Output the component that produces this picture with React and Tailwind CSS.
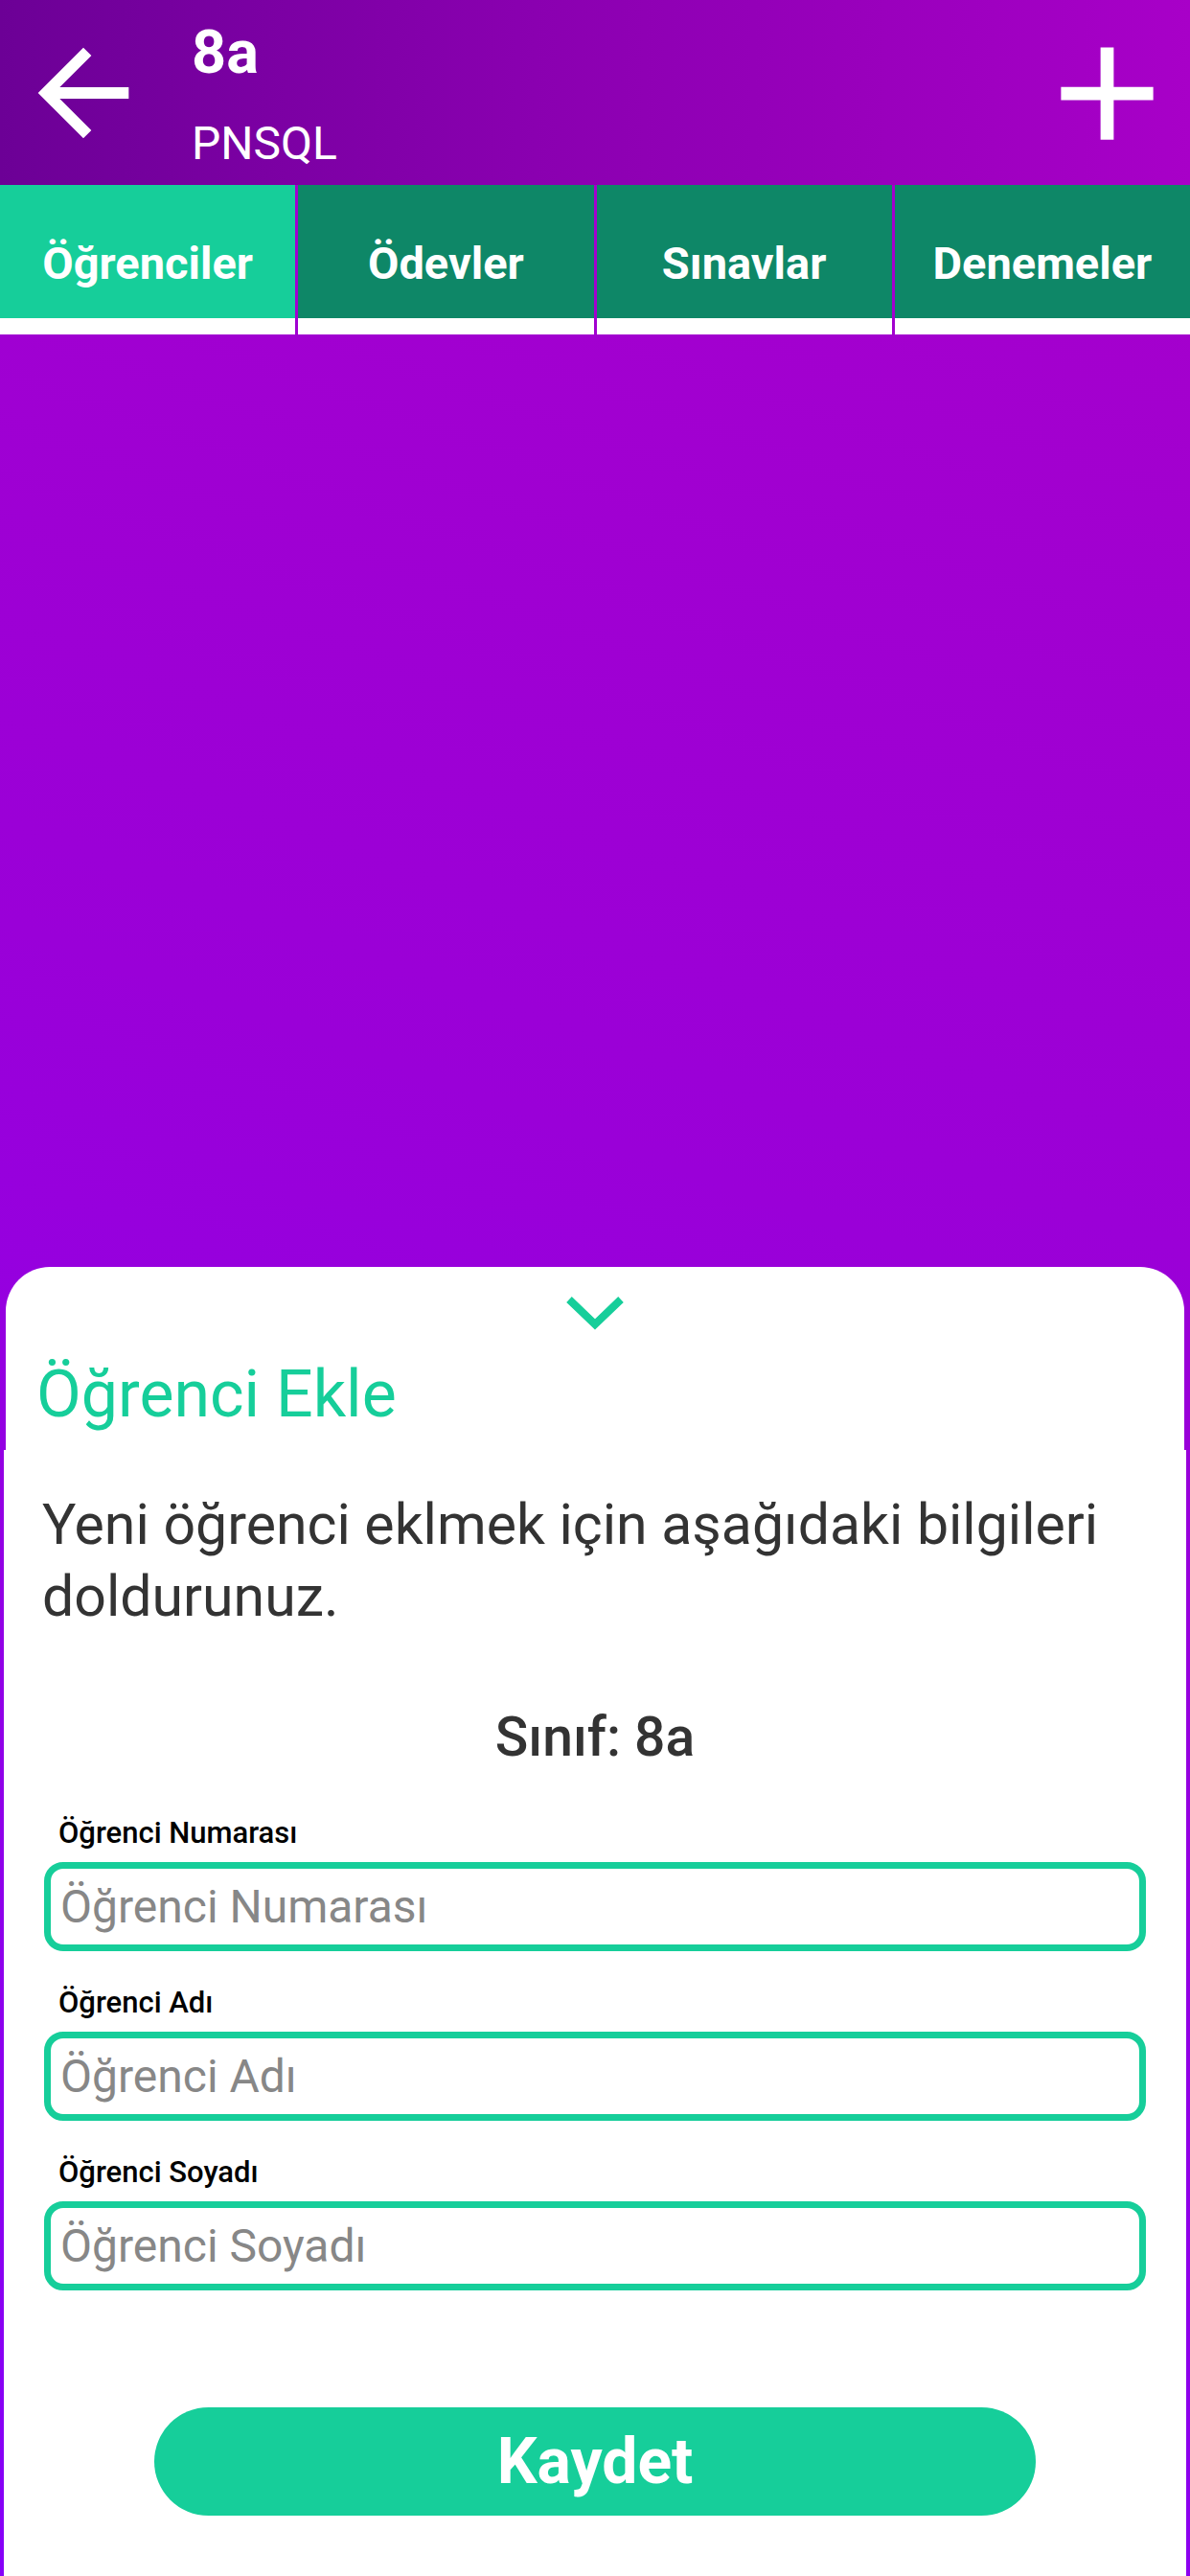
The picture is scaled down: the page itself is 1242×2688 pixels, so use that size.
import React from "react";

const font = { fontFamily: "Roboto, 'Noto Sans', sans-serif" };

function ArrowBack() {
  return (
    <svg viewBox="0 0 24 24" className="w-[142px] h-[142px]" fill="white">
      <path d="M20 11H7.83l5.59-5.59L12 4l-8 8 8 8 1.41-1.41L7.83 13H20v-2z" />
    </svg>
  );
}

function Plus() {
  return (
    <svg viewBox="0 0 24 24" className="w-[165px] h-[165px]" fill="white">
      <path d="M19 13h-6v6h-2v-6H5v-2h6V5h2v6h6v2z" />
    </svg>
  );
}

function Field({ label }) {
  return (
    <div className="flex flex-col">
      <div className="text-[31px] leading-[36px] font-medium text-black pl-[57px]">{label}</div>
      <div className="mt-[12px] mx-[42px] h-[93px] border-[7px] border-[#16CE9A] rounded-[20px] flex items-center pl-[10px]">
        <span className="text-[48px] leading-[54px] text-[#878787]">{label}</span>
      </div>
    </div>
  );
}

export default function App() {
  const tabs = ["Öğrenciler", "Ödevler", "Sınavlar", "Denemeler"];
  return (
    <div
      style={font}
      className="w-[1242px] h-[2688px] overflow-hidden flex flex-col bg-[linear-gradient(200deg,#A700CA_0%,#9A00D8_45%,#8600F8_100%)]"
    >
      {/* Header */}
      <div className="h-[193px] flex items-start bg-[linear-gradient(90deg,#6C0096_0%,#8A00B0_45%,#A800C8_100%)]">
        <div className="ml-[16px] mt-[26px]">
          <ArrowBack />
        </div>
        <div className="flex flex-col ml-[42px] pt-[24px] text-white">
          <div className="text-[63px] leading-[62px] font-bold">8a</div>
          <div className="text-[48px] leading-[48px] mt-[40px]">PNSQL</div>
        </div>
        <div className="ml-auto mr-[4px] mt-[15px]">
          <Plus />
        </div>
      </div>

      {/* Tabs */}
      <div className="flex gap-[3px]">
        {tabs.map((t, i) => (
          <div key={t} className="flex-1 flex flex-col">
            <div
              className={
                "h-[139px] flex justify-center pt-[59px] text-white font-bold text-[47px] leading-[46px] " +
                (i === 0 ? "bg-[#16CE9A]" : "bg-[#0E8767]")
              }
            >
              {t}
            </div>
            <div className="h-[17px] bg-white" />
          </div>
        ))}
      </div>

      {/* Purple area */}
      <div className="h-[973px]" />

      {/* Sheet header */}
      <div className="mx-[6px] h-[191px] bg-white rounded-t-[46px] flex flex-col">
        <div className="flex justify-center pt-[30px]">
          <svg width="62" height="36" viewBox="0 0 62 36">
            <path d="M4 4 L31 30 L58 4" fill="none" stroke="#16CE9A" strokeWidth="8" />
          </svg>
        </div>
        <div className="text-[68px] leading-[66px] text-[#16CE9A] pl-[32px] mt-[34px]">Öğrenci Ekle</div>
      </div>

      {/* Sheet body */}
      <div className="mx-[4px] flex-1 bg-white flex flex-col">
        <div className="pt-[40px] pl-[40px] pr-[30px] text-[59px] leading-[75px] text-[#333333]">
          Yeni öğrenci eklmek için aşağıdaki bilgileri doldurunuz.
        </div>
        <div className="mt-[78px] text-center text-[57px] leading-[64px] font-medium text-[#333333]">
          Sınıf: 8a
        </div>
        <div className="mt-[50px] flex flex-col gap-[36px]">
          <Field label="Öğrenci Numarası" />
          <Field label="Öğrenci Adı" />
          <Field label="Öğrenci Soyadı" />
        </div>
        <div className="mt-[122px] flex justify-center">
          <div className="w-[920px] h-[113px] rounded-full bg-[#16CE9A] flex items-center justify-center text-white font-bold text-[66px]">
            Kaydet
          </div>
        </div>
      </div>
    </div>
  );
}
